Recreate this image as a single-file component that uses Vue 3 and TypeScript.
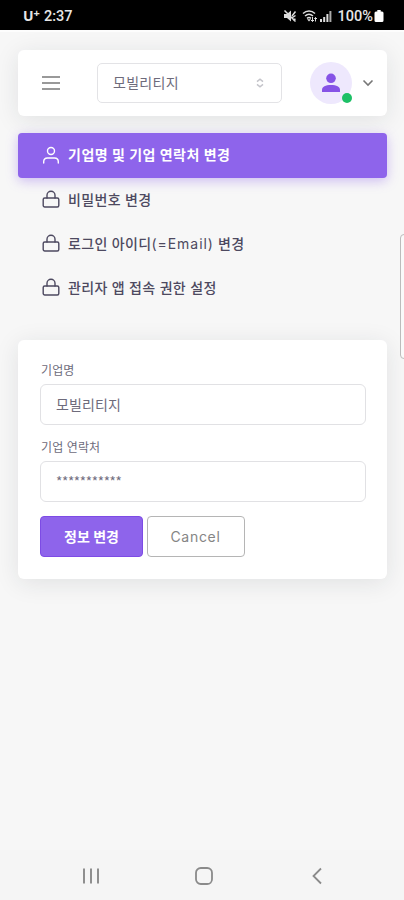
<script setup lang="ts">
import { ref } from 'vue'

interface MenuItem {
  label: string
  latin?: string
  tail?: string
  icon: 'user' | 'lock'
}

const menu: MenuItem[] = [
  { label: '기업명 및 기업 연락처 변경', icon: 'user' },
  { label: '비밀번호 변경', icon: 'lock' },
  { label: '로그인 아이디', latin: '(=Email)', tail: ' 변경', icon: 'lock' },
  { label: '관리자 앱 접속 권한 설정', icon: 'lock' },
]
const active = ref(0)
const company = '모빌리티지'
const contact = '***********'
</script>

<template>
  <div class="screen">
    <header class="status">
      <div class="carrier">
        <span class="brand">U<sup>+</sup></span>
        <span>2:37</span>
      </div>
      <div class="signals">
        <svg width="14" height="14" viewBox="0 0 14 14" fill="none" stroke="#ddd">
          <path d="M1 5h3l4-3.500v11L4 9H1z" fill="#ddd" stroke="none" />
          <path d="M1.500 1.500L12.500 12.500M9 7l3.500-4.500M9.500 8.500l3-2M10 11l2.500-1" stroke-width="1.500" />
        </svg>
        <svg class="wifi" width="16" height="14" viewBox="0 0 16 14" fill="none" stroke="#ddd">
          <path d="M1 4.500C4.500 1.300 9.500 1.300 13 4.500M3 7c2.500-2.200 5.500-2.200 8 0M5 9.300c1.300-1 2.700-1 4 0" stroke-width="1.500" />
          <path d="M7 12.500l-2-2.300h4z" fill="#ddd" stroke="none" />
          <path d="M10.500 8v4.500M9 11l1.500 1.500L12 11M13.500 12.500V8.500M12.300 10l1.200-1.500L15 10" stroke-width="1" />
        </svg>
        <svg width="12" height="14" viewBox="0 0 12 14" fill="#ddd">
          <path d="M0 10h2v3H0zM3.200 8h2v5h-2zM6.400 5h2v8h-2z" />
          <path d="M9.400 2h2v11h-2z" fill="#aaa" />
        </svg>
        <span class="percent">100%</span>
        <svg width="10" height="14" viewBox="0 0 10 14" fill="#fff">
          <path d="M3.300 1h3.400v1.500H8a1.500 1.500 0 0 1 1.500 1.500v7.500A1.500 1.500 0 0 1 8 13H2a1.500 1.500 0 0 1-1.500-1.500V4A1.500 1.500 0 0 1 2 2.500h1.300z" />
        </svg>
      </div>
    </header>

    <main class="page">
      <section class="topbar">
        <svg class="burger" width="20" height="16" viewBox="0 0 20 16" stroke="#999" stroke-width="2.200">
          <path d="M1 2h18M1 8h18M1 14h18" />
        </svg>
        <div class="select">
          <span>{{ company }}</span>
          <svg width="8" height="10" viewBox="0 0 8 10" fill="none" stroke="#c4c4ca" stroke-width="1.500">
            <path d="M1 3.700L4 1.200l3 2.500M1 6.300l3 2.500 3-2.500" />
          </svg>
        </div>
        <div class="avatar">
          <svg width="20" height="20" viewBox="0 0 20 20" fill="#8653e6">
            <circle cx="10" cy="5.300" r="4.800" />
            <path d="M1 19v-2c0-3.200 3.500-5 9-5s9 1.800 9 5v2z" />
          </svg>
          <i class="online"></i>
        </div>
        <svg class="caret" width="12" height="8" viewBox="0 0 12 8" fill="none" stroke="#777" stroke-width="1.600">
          <path d="M1.500 1.500L6 6l4.500-4.500" />
        </svg>
      </section>

      <nav class="menu">
        <a v-for="(item, i) in menu" :key="item.label" class="item" :class="{ active: i === active }" @click="active = i">
          <svg width="18" height="18" viewBox="0 0 18 18" fill="none" stroke="currentColor" stroke-width="1.400" stroke-linecap="round" stroke-linejoin="round">
            <template v-if="item.icon === 'user'">
              <circle cx="9" cy="5" r="3.500" />
              <path d="M1.700 17v-1.200c0-2.300 1.500-3.800 3.800-3.800h7c2.300 0 3.800 1.500 3.800 3.800V17" />
            </template>
            <template v-else>
              <rect x="1.200" y="8" width="15.600" height="9" rx="1.500" />
              <path d="M5 8V5.200a4 4 0 0 1 8 0V8" />
            </template>
          </svg>
          <span class="text">{{ item.label }}<span v-if="item.latin" class="latin">{{ item.latin }}</span>{{ item.tail }}</span>
        </a>
      </nav>

      <form class="card" @submit.prevent>
        <label class="label">기업명</label>
        <div class="field">{{ company }}</div>
        <label class="label second">기업 연락처</label>
        <div class="field masked">{{ contact }}</div>
        <div class="actions">
          <button class="btn primary">정보 변경</button>
          <button class="btn outline" type="button">Cancel</button>
        </div>
      </form>
    </main>

    <div class="edge-handle"></div>

    <footer class="navbar">
      <svg width="18" height="18" viewBox="0 0 18 18" stroke="#8a8a8a" stroke-width="1.900">
        <path d="M2 1.500v15M9 1.500v15M16 1.500v15" />
      </svg>
      <svg width="18" height="18" viewBox="0 0 18 18" fill="none" stroke="#8a8a8a" stroke-width="1.800">
        <rect x="1" y="1" width="16" height="16" rx="4.800" />
      </svg>
      <svg width="18" height="18" viewBox="0 0 18 18" fill="none" stroke="#8a8a8a" stroke-width="1.800">
        <path d="M13 1.500L5.500 9l7.500 7.500" />
      </svg>
    </footer>
  </div>
</template>

<style>
body {
  background: #f7f7f7;
}
</style>

<style scoped>
.screen {
  position: relative;
  display: flex;
  flex-direction: column;
  box-sizing: border-box;
  width: 404px;
  height: 900px;
  overflow: hidden;
  background: #f7f7f7;
  color: #6e6b7b;
  font-family: Inter, 'Noto Sans CJK KR', sans-serif;
  font-size: 14px;
}
.status {
  display: flex;
  justify-content: space-between;
  align-items: center;
  box-sizing: border-box;
  height: 30px;
  padding: 2px 20px 0 23px;
  background: #000;
  box-shadow: 0 2px 0 #fdfdfd;
  color: #e6e6e6;
  font: 500 14.5px Roboto, sans-serif;
}
.carrier,
.signals {
  display: flex;
  align-items: center;
}
.carrier {
  gap: 4px;
}
.brand {
  font: 700 14px/16px 'Open Sans', sans-serif;
}
.brand sup {
  font-size: 11px;
  line-height: 0;
  vertical-align: 4px;
}
.wifi {
  margin: 0 2px 0 5px;
}
.percent {
  margin: 0 1px 0 6px;
}
.page {
  flex: 1;
  padding: 20px 17px 0 18px;
}
.topbar {
  display: flex;
  align-items: center;
  box-sizing: border-box;
  height: 66px;
  padding: 0 12px 0 23px;
  border-radius: 6px;
  background: #fff;
  box-shadow: 0 4px 24px rgba(34, 41, 47, 0.1);
}
.select {
  display: flex;
  align-items: center;
  justify-content: space-between;
  box-sizing: border-box;
  width: 185px;
  height: 40px;
  margin-left: 36px;
  padding: 0 17px 0 15px;
  border: 1px solid #e3e3e6;
  border-radius: 5px;
}
.select span {
  padding-bottom: 2px;
  letter-spacing: 0.3px;
}
.avatar {
  position: relative;
  display: flex;
  align-items: center;
  justify-content: center;
  width: 42px;
  height: 42px;
  margin-left: 28px;
  border-radius: 50%;
  background: #eee8fd;
}
.online {
  position: absolute;
  right: 0;
  bottom: 1px;
  width: 10px;
  height: 10px;
  border-radius: 50%;
  background: #1dc066;
}
.caret {
  margin-left: 10px;
}
.menu {
  display: flex;
  flex-direction: column;
  margin-top: 17px;
}
.item {
  display: flex;
  align-items: center;
  gap: 8px;
  box-sizing: border-box;
  height: 44px;
  padding: 0 0 2px 24px;
  border-radius: 4px;
  color: #4d4960;
  font-weight: 500;
  letter-spacing: 0.35px;
  cursor: pointer;
}
.item.active {
  height: 45px;
  background: #8e64eb;
  box-shadow: 0 3px 12px rgba(142, 100, 235, 0.4);
  color: #fff;
  font-weight: 700;
  letter-spacing: 0.5px;
}
.text {
  padding-top: 1px;
  line-height: 20px;
}
.latin {
  font-weight: 400;
  letter-spacing: 0.95px;
}
.card {
  box-sizing: border-box;
  height: 239px;
  margin-top: 30px;
  padding: 22px 21px 0 22px;
  border-radius: 6px;
  background: #fff;
  box-shadow: 0 4px 24px rgba(34, 41, 47, 0.1);
}
.label {
  display: block;
  height: 18px;
  margin-bottom: 4px;
  padding-left: 1px;
  font-size: 12px;
  line-height: 18px;
  letter-spacing: 0.1px;
}
.label.second {
  margin-top: 14px;
}
.field {
  box-sizing: border-box;
  height: 41px;
  padding-left: 15px;
  border: 1px solid #e1e1e4;
  border-radius: 6px;
  line-height: 39px;
  letter-spacing: 0.15px;
}
.masked {
  font-family: 'Noto Sans CJK KR', sans-serif;
  font-size: 13.5px;
  letter-spacing: -0.35px;
}
.actions {
  display: flex;
  gap: 4px;
  margin-top: 14px;
}
.btn {
  box-sizing: border-box;
  height: 41px;
  padding: 0 0 1px;
  border-radius: 4px;
  font: 700 14px Inter, 'Noto Sans CJK KR', sans-serif;
}
.primary {
  width: 103px;
  border: 1px solid #7d4be5;
  background: #8e64eb;
  color: #fff;
}
.outline {
  width: 98px;
  padding-right: 1px;
  border: 1px solid #b5b5b5;
  background: #fff;
  color: #858585;
  font-weight: 400;
  letter-spacing: 0.7px;
}
.edge-handle {
  position: absolute;
  top: 234px;
  right: -5px;
  box-sizing: border-box;
  width: 9px;
  height: 125px;
  border: 1px solid #bcbcbc;
  border-radius: 4px;
  background: #fafafa;
}
.navbar {
  display: flex;
  align-items: center;
  justify-content: space-between;
  box-sizing: border-box;
  height: 50px;
  padding: 2px 78px 0 82px;
  background: #f5f5f5;
}
</style>
